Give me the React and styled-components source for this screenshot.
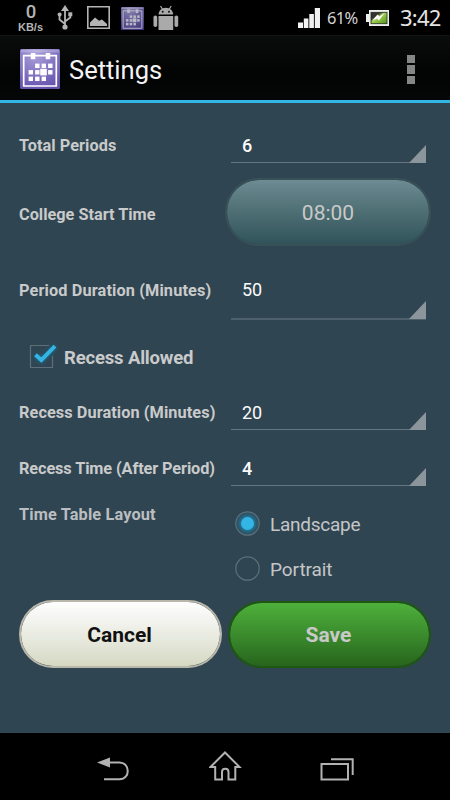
import React from "react";
import styled, { createGlobalStyle } from "styled-components";

const Global = createGlobalStyle`
  * { box-sizing: border-box; }
  body { margin: 0; background: #000; font-family: Roboto, "Liberation Sans", sans-serif; }
  button { font-family: inherit; padding: 0; }
  svg { display: block; flex: none; }
`;

const Screen = styled.div`
  width: 450px;
  height: 800px;
  display: flex;
  flex-direction: column;
  background: #304552;
  overflow: hidden;
`;

const StatusBar = styled.header`
  height: 35px;
  flex: none;
  display: flex;
  align-items: flex-start;
  justify-content: space-between;
  background: #000;
  color: #b4b4b4;
`;

const StatusGroup = styled.div`
  display: flex;
  align-items: flex-start;
`;

const Speed = styled.div`
  width: 28px;
  margin: 2px 0 0 17px;
  display: flex;
  flex-direction: column;
  align-items: center;
`;

const SpeedValue = styled.span`
  font-size: 18.5px;
  font-weight: 500;
  line-height: 20px;
`;

const SpeedUnit = styled.span`
  margin-left: -1px;
  font-family: "Liberation Sans", sans-serif;
  font-size: 11px;
  font-weight: 700;
  line-height: 10px;
  white-space: nowrap;
`;

const Percent = styled.span`
  width: 32px;
  margin: 8px 0 0 7px;
  font-family: "Noto Sans", sans-serif;
  font-size: 16.5px;
  line-height: 20px;
  letter-spacing: -0.7px;
  color: #d4d4d4;
`;

const Clock = styled.span`
  width: 50px;
  margin-top: 5px;
  font-family: "Noto Sans", sans-serif;
  font-size: 22px;
  line-height: 25px;
  letter-spacing: -0.8px;
  color: #e4e4e4;
`;

const ActionBar = styled.div`
  height: 68px;
  flex: none;
  display: flex;
  align-items: center;
  padding: 2px 35px 0 20px;
  background: linear-gradient(#0a0b0b, #020303 60%, #060808);
  border-bottom: 3px solid #33b5e5;
  border-top: 1px solid #141414;
`;

const Title = styled.h1`
  flex: 1;
  margin: 1px 0 0 9px;
  font-size: 25.5px;
  line-height: 30px;
  font-weight: 400;
  color: #f3f3f3;
`;

const Overflow = styled.button`
  display: flex;
  flex-direction: column;
  gap: 2px;
  margin-top: 1px;
  border: 0;
  background: none;
`;

const OverflowDot = styled.span`
  width: 8.5px;
  height: 8.2px;
  background: #868686;
`;

const Form = styled.main`
  flex: 1;
`;

const Row = styled.div`
  height: ${(p) => p.$h}px;
  display: grid;
  grid-template-columns: 212px 1fr;
  align-items: start;
  padding-left: 19px;
`;

const Label = styled.span`
  margin-top: ${(p) => p.$top}px;
  font-size: 16.3px;
  line-height: 20px;
  font-weight: 700;
  letter-spacing: ${(p) => p.$ls || 0}px;
  white-space: nowrap;
  color: ${(p) => (p.$muted ? "#bbbec0" : "#c9caca")};
`;

const Spinner = styled.div`
  width: 195px;
  height: ${(p) => p.$h}px;
  margin-top: ${(p) => p.$top}px;
  padding: 8px 0 0 11px;
  display: flex;
  justify-content: space-between;
  border-bottom: ${(p) => p.$line || 1}px solid ${(p) => (p.$line ? "#4e606c" : "#667680")};
  font-size: 18px;
  line-height: 20px;
  font-weight: ${(p) => p.$weight || 400};
  color: #fafafa;
`;

const Corner = styled.i`
  align-self: flex-end;
  width: 17px;
  height: 18px;
  margin-bottom: -1px;
  background: #8c959b;
  clip-path: polygon(100% 0, 100% 100%, 0 100%);
`;

const Pill = styled.button`
  width: ${(p) => p.$w}px;
  height: ${(p) => p.$h}px;
  flex: none;
  padding-top: 2px;
  border-radius: 34px;
  font-size: 21px;
  color: #c9c9c9;
`;

const TimeButton = styled(Pill)`
  margin: 7px 0 0 -6px;
  border: 2px solid #385157;
  background: linear-gradient(#6c8b93, #4c6d72 52%, #30535b) padding-box;
`;

const CancelButton = styled(Pill)`
  padding-right: 2px;
  border: 2px solid #b9b7aa;
  background: linear-gradient(#fefefe, #edefe7 42%, #d5d9c3) padding-box;
  color: #111;
  font-weight: 700;
`;

const SaveButton = styled(Pill)`
  padding-right: 2px;
  border: 2px solid #1d5712;
  background: linear-gradient(#4eb03b, #3a8a2c 52%, #27651c) padding-box;
  font-weight: 700;
`;

const CheckRow = styled.label`
  height: 55px;
  display: flex;
  padding-left: 26px;
`;

const CheckText = styled.span`
  margin: 11px 0 0 6px;
  font-size: 18.5px;
  line-height: 24px;
  font-weight: 700;
  letter-spacing: -0.17px;
  color: #c9caca;
`;

const Radios = styled.div`
  display: flex;
  flex-direction: column;
  gap: 19px;
  padding: 14px 0 0 3px;
`;

const RadioRow = styled.label`
  display: flex;
  align-items: center;
  gap: 9px;
  height: 26px;
  font-size: 19px;
  line-height: 24px;
  letter-spacing: ${(p) => p.$ls || 0}px;
  color: #c5c6c7;
`;

const RadioText = styled.span`
  padding-top: 3px;
`;

const Actions = styled.div`
  display: flex;
  align-items: center;
  gap: 6px;
  margin-top: 5px;
  padding-left: 19px;
`;

const NavBar = styled.nav`
  height: 67px;
  flex: none;
  display: flex;
  justify-content: space-between;
  padding: 17px 94px 0 95px;
  background: #000;
`;

const CalendarIcon = ({ size, dim }) => {
  const id = dim ? "calDim" : "calBright";
  const ink = dim ? "#b9b9c5" : "#fff";
  const cells = [
    [15.5, 15], [22, 15], [28.5, 15],
    [9, 21.5], [15.5, 21.5], [28.5, 21.5],
    [9, 28], [15.5, 28], [22, 28],
  ];
  return (
    <svg width={size} height={size} viewBox="0 0 40 40">
      <defs>
        <radialGradient id={id} cx="0.4" cy="0.15" r="0.9">
          <stop offset="0" stopColor={dim ? "#8580ae" : "#aaa0da"} />
          <stop offset="1" stopColor={dim ? "#43377f" : "#624fac"} />
        </radialGradient>
      </defs>
      <rect width="40" height="40" rx="1.5" fill={`url(#${id})`} />
      <path d="M1 2H39" stroke="#fff" strokeOpacity="0.25" strokeWidth="3" />
      <path d="M3.7 6.7H36.3V37H3.7Z" fill="none" stroke={ink} strokeWidth="1.7" />
      <path d="M10.8 4h4.5v6.3h-4.5zM25.7 4h4.5v6.3h-4.5z" fill={ink} />
      {cells.map(([x, y]) => (
        <rect key={`${x}-${y}`} x={x - 0.4} y={y - 0.4} width="4.4" height="4.4" fill={ink} />
      ))}
      <rect x="20.2" y="19.8" width="6.6" height="6.6" fill={ink} />
    </svg>
  );
};

const NotificationIcons = styled.div`
  display: flex;
  align-items: flex-start;
  padding: 5px 0 0 12px;
`;

const PictureIcon = styled.svg`
  margin: 1px 0 0 14px;
`;

const CalendarSlot = styled.div`
  margin: 1.5px 0 0 11px;
`;

const AndroidIcon = styled.svg`
  margin: 0 0 0 9px;
`;

const SignalIcon = styled.svg`
  margin-top: 8px;
`;

const BatteryIcon = styled.svg`
  margin: 10px 11px 0 7px;
`;

const CheckIcon = () => (
  <svg width="32" height="38" viewBox="0 0 32 38">
    <defs>
      <filter id="checkGlow" x="-40%" y="-40%" width="180%" height="180%">
        <feGaussianBlur stdDeviation="2" />
      </filter>
    </defs>
    <path d="M23 10.5H4.5V32.5H26.5V21" fill="none" stroke="#5e6f79" strokeWidth="1.2" />
    <path d="M9.5 20.5L15.5 25.5L29 11.5" fill="none" stroke="#168ab8" strokeWidth="4" opacity="0.65" filter="url(#checkGlow)" />
    <path d="M9.5 19.8L15.3 25L29 11.2" fill="none" stroke="#33b5e5" strokeWidth="3.9" />
  </svg>
);

const RadioIcon = ({ checked }) => (
  <svg width="27" height="26" viewBox="0 0 27 26">
    <defs>
      <radialGradient id="radioGlow">
        <stop offset="0.5" stopColor="#198bb8" stopOpacity="0.8" />
        <stop offset="1" stopColor="#2b5f76" stopOpacity="0.25" />
      </radialGradient>
    </defs>
    <circle cx="13.5" cy="13.5" r="11.7" fill={checked ? "url(#radioGlow)" : "none"} stroke="#5c707b" strokeWidth="1.2" />
    {checked && <circle cx="13.5" cy="13.5" r="6.5" fill="#33b5e5" />}
  </svg>
);

export default function App() {
  return (
    <>
      <Global />
      <Screen>
        <StatusBar>
          <StatusGroup>
            <Speed>
              <SpeedValue>0</SpeedValue>
              <SpeedUnit>KB/s</SpeedUnit>
            </Speed>
            <NotificationIcons>
              <svg width="16" height="26" viewBox="0 0 16 26">
                <path d="M8 5V22M8 19L2.5 14.5V10.5M8 16.5L13.3 12.5V9" fill="none" stroke="#b4b4b4" strokeWidth="1.8" />
                <path d="M8 0L12 6H4Z" fill="#b4b4b4" />
                <circle cx="8" cy="22" r="2.6" fill="#b4b4b4" />
                <circle cx="2.6" cy="9.6" r="2" fill="#b4b4b4" />
                <path d="M11.3 7.3h4v4h-4z" fill="#b4b4b4" />
              </svg>
              <PictureIcon width="23" height="23" viewBox="0 0 23 23">
                <path d="M0.8 0.8H22.2V22.2H0.8Z" fill="none" stroke="#b4b4b4" strokeWidth="1.6" />
                <path d="M3 20V16.5L8 11.5L12 14.8L15 13.5L20 18V20Z" fill="#b4b4b4" />
              </PictureIcon>
              <CalendarSlot><CalendarIcon size={23} dim /></CalendarSlot>
              <AndroidIcon width="26" height="26" viewBox="0 0 26 26">
                <path d="M5.5 9.5C5.7 5.8 8.5 2.7 12.8 2.7S20 5.8 20.2 9.5Z" fill="#aaa" />
                <path d="M7.5 1L9.5 4.2M18.2 1L16.2 4.2" stroke="#aaa" strokeWidth="1.2" />
                <circle cx="9.7" cy="6.7" r="1" fill="#111" />
                <circle cx="16" cy="6.7" r="1" fill="#111" />
                <path d="M5.5 11H20.2V25H5.5Z" fill="#aaa" />
                <rect x="0.5" y="10.5" width="3.7" height="11.5" rx="1.8" fill="#aaa" />
                <rect x="21.5" y="10.5" width="3.7" height="11.5" rx="1.8" fill="#aaa" />
              </AndroidIcon>
            </NotificationIcons>
          </StatusGroup>
          <StatusGroup>
            <SignalIcon width="22" height="20" viewBox="0 0 22 20">
              <path d="M0 14.5h5V20H0zM5.8 10.5h4.6V20H5.8zM11.3 6h4.6v14h-4.6zM16.8 0H22v20h-5.2z" fill="#f2f2f2" />
            </SignalIcon>
            <Percent>61%</Percent>
            <BatteryIcon width="23" height="16" viewBox="0 0 23 16">
              <defs>
                <linearGradient id="charge" x1="0" y1="0" x2="1" y2="1">
                  <stop offset="0.3" stopColor="#333" />
                  <stop offset="0.45" stopColor="#a4cf55" />
                  <stop offset="1" stopColor="#4d9412" />
                </linearGradient>
              </defs>
              <path d="M0 4H3V0H23V16H3V12H0Z" fill="#eee" />
              <rect x="5" y="2.3" width="16" height="11.4" fill="url(#charge)" stroke="#24301a" strokeWidth="0.8" />
              <path d="M6 11L11.5 4.5L13.5 6.5L18.5 3L13 10.5L11 8.5Z" fill="#fff" />
            </BatteryIcon>
            <Clock>3:42</Clock>
          </StatusGroup>
        </StatusBar>

        <ActionBar>
          <CalendarIcon size={40} />
          <Title>Settings</Title>
          <Overflow aria-label="More options">
            <OverflowDot />
            <OverflowDot />
            <OverflowDot />
          </Overflow>
        </ActionBar>

        <Form>
          <Row $h={68}>
            <Label $top={33} $ls={0.05}>Total Periods</Label>
            <Spinner $top={25} $h={35} $weight={500}>6<Corner /></Spinner>
          </Row>
          <Row $h={89}>
            <Label $top={34}>College Start Time</Label>
            <TimeButton $w={206} $h={68}>08:00</TimeButton>
          </Row>
          <Row $h={75}>
            <Label $top={21} $ls={0.13}>Period Duration (Minutes)</Label>
            <Spinner $top={12} $h={48} $line={2}>50<Corner /></Spinner>
          </Row>
          <CheckRow>
            <CheckIcon />
            <CheckText>Recess Allowed</CheckText>
          </CheckRow>
          <Row $h={50}>
            <Label $top={13} $ls={0.08}>Recess Duration (Minutes)</Label>
            <Spinner $top={5} $h={35}>20<Corner /></Spinner>
          </Row>
          <Row $h={56}>
            <Label $top={19} $ls={-0.1}>Recess Time (After Period)</Label>
            <Spinner $top={11} $h={35} $weight={500}>4<Corner /></Spinner>
          </Row>
          <Row $h={99}>
            <Label $top={9} $ls={0.15} $muted>Time Table Layout</Label>
            <Radios>
              <RadioRow $ls={-0.25}><RadioIcon checked /><RadioText>Landscape</RadioText></RadioRow>
              <RadioRow $ls={-0.07}><RadioIcon /><RadioText>Portrait</RadioText></RadioRow>
            </Radios>
          </Row>
          <Actions>
            <CancelButton $w={203} $h={68}>Cancel</CancelButton>
            <SaveButton $w={203} $h={67}>Save</SaveButton>
          </Actions>
        </Form>

        <NavBar>
          <svg width="36" height="36" viewBox="0 0 36 36">
            <path d="M12 12.5H24.5C35.5 12.5 35.5 29.3 24.5 29.3H9" fill="none" stroke="#b2b2b2" strokeWidth="2" />
            <path d="M2 12.5L15 7.5V17.5Z" fill="#b2b2b2" />
          </svg>
          <svg width="34" height="36" viewBox="0 0 34 36">
            <path d="M16 2.5L30.5 17H26.3V29.5H19.5V22C19.5 17.6 13 17.6 13 22V29.5H6.2V17H1.5Z" fill="none" stroke="#b2b2b2" strokeWidth="2" />
          </svg>
          <svg width="36" height="36" viewBox="0 0 36 36">
            <path d="M1.5 14H28V29.5H1.5Z" fill="none" stroke="#b2b2b2" strokeWidth="2" />
            <path d="M11 9.3H32.7V25" fill="none" stroke="#b2b2b2" strokeWidth="2" />
          </svg>
        </NavBar>
      </Screen>
    </>
  );
}
